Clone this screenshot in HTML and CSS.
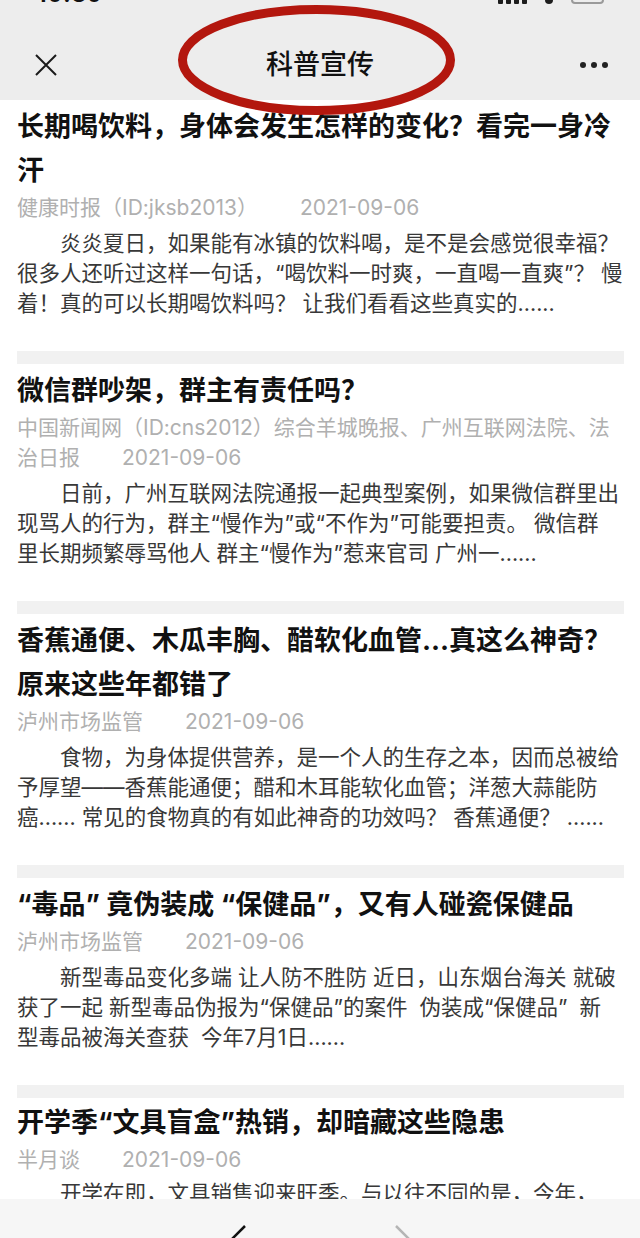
FILE: index.html
```html
<!DOCTYPE html>
<html lang="zh-CN">
<head>
    <meta charset="UTF-8">
    <meta name="viewport" content="width=device-width, initial-scale=1.0">
    <title>科普宣传</title>
    <link rel="stylesheet" href="styles.css">
</head>
<body>
    <header class="topbar">
        <div class="status">
            <span class="status-time">10:30</span>
            <span class="status-icons">
                <span class="signal"><i></i><i></i><i></i><i></i></span>
                <span class="wifi"></span>
                <span class="battery"></span>
            </span>
        </div>
        <div class="nav">
            <button class="nav-close" aria-label="关闭">
                <svg width="22" height="22" viewBox="0 0 22 22"><path d="M1 1L21 21M21 1L1 21" stroke="#1a1a1a" stroke-width="2" fill="none"/></svg>
            </button>
            <h1 class="nav-title">科普宣传</h1>
            <button class="nav-more" aria-label="更多"><span></span><span></span><span></span></button>
        </div>
    </header>

    <!-- hand-drawn red circle around the title -->
    <svg class="mark" width="285" height="122" viewBox="0 0 285 122">
        <ellipse cx="142.5" cy="60" rx="134" ry="50.5" fill="none" stroke="#b3170e" stroke-width="9"/>
    </svg>

    <main class="feed">
        <article class="post">
            <h2 class="post-title">长期喝饮料，身体会发生怎样的变化？看完一身冷汗</h2>
            <p class="post-meta">健康时报（ID:jksb2013）<span class="post-date">2021-09-06</span></p>
            <p class="post-summary">炎炎夏日，如果能有冰镇的饮料喝，是不是会感觉很幸福？<br>很多人还听过这样一句话，“喝饮料一时爽，一直喝一直爽”？ 慢<br>着！真的可以长期喝饮料吗？ 让我们看看这些真实的......</p>
        </article>
        <div class="divider"></div>

        <article class="post">
            <h2 class="post-title">微信群吵架，群主有责任吗？</h2>
            <p class="post-meta">中国新闻网（ID:cns2012）综合羊城晚报、广州互联网法院、法治日报<span class="post-date">2021-09-06</span></p>
            <p class="post-summary">日前，广州互联网法院通报一起典型案例，如果微信群里出<br>现骂人的行为，群主“慢作为”或“不作为”可能要担责。 微信群<br>里长期频繁辱骂他人 群主“慢作为”惹来官司 广州一......</p>
        </article>
        <div class="divider"></div>

        <article class="post">
            <h2 class="post-title">香蕉通便、木瓜丰胸、醋软化血管...真这么神奇？原来这些年都错了</h2>
            <p class="post-meta">泸州市场监管<span class="post-date">2021-09-06</span></p>
            <p class="post-summary">食物，为身体提供营养，是一个人的生存之本，因而总被给<br>予厚望——香蕉能通便；醋和木耳能软化血管；洋葱大蒜能防<br>癌...... 常见的食物真的有如此神奇的功效吗？ 香蕉通便？ ......</p>
        </article>
        <div class="divider"></div>

        <article class="post">
            <h2 class="post-title">“毒品” 竟伪装成 “保健品”，又有人碰瓷保健品</h2>
            <p class="post-meta">泸州市场监管<span class="post-date">2021-09-06</span></p>
            <p class="post-summary">新型毒品变化多端 让人防不胜防 近日，山东烟台海关 就破<br>获了一起 新型毒品伪报为“保健品”的案件&nbsp; 伪装成“保健品”&nbsp; 新<br>型毒品被海关查获&nbsp; 今年7月1日......</p>
        </article>
        <div class="divider"></div>

        <article class="post last">
            <h2 class="post-title">开学季“文具盲盒”热销，却暗藏这些隐患</h2>
            <p class="post-meta">半月谈<span class="post-date">2021-09-06</span></p>
            <p class="post-summary">开学在即，文具销售迎来旺季。与以往不同的是，今年，</p>
        </article>
    </main>

    <footer class="toolbar">
        <svg width="640" height="39" viewBox="0 0 640 39">
            <polyline points="245,27 231,41 245,55" fill="none" stroke="#111" stroke-width="2.5"/>
            <polyline points="396,27 410,41 396,55" fill="none" stroke="#b5b5b5" stroke-width="2.5"/>
        </svg>
    </footer>
</body>
</html>
```

FILE: styles.css
```css
body {
    margin: 0;
    background: #fff;
    font-family: Inter, "Noto Sans CJK SC", sans-serif;
    overflow: hidden;
}

/* top grey area: status bar + nav */
.topbar {
    background: #ededed;
    height: 100px;
}
.status {
    height: 30px;
    display: flex;
    justify-content: space-between;
    align-items: flex-start;
    padding: 0 36px 0 37px;
    overflow: hidden;
}
.status-time {
    font-size: 22px;
    font-weight: 700;
    line-height: 20px;
    margin-top: -16px;
    letter-spacing: 1px;
    color: #111;
}
.status-icons {
    display: flex;
    align-items: flex-end;
    gap: 18px;
    height: 14px;
    margin-top: -10px;
}
.signal {
    display: flex;
    align-items: flex-end;
    gap: 3px;
    height: 14px;
}
.signal i {
    width: 5px;
    background: #1d1d1d;
    border-radius: 1px;
}
.signal i:nth-child(1) { height: 6px; }
.signal i:nth-child(2) { height: 8px; }
.signal i:nth-child(3) { height: 11px; }
.signal i:nth-child(4) { height: 14px; }
.wifi {
    width: 8px;
    height: 6px;
    background: #1d1d1d;
    border-radius: 0 0 4px 4px;
}
.battery {
    width: 29px;
    height: 10px;
    border: 2px solid #9a9a9a;
    border-radius: 4px;
}

.nav {
    height: 70px;
    display: grid;
    grid-template-columns: 92px 1fr 92px;
    align-items: center;
}
.nav-close {
    justify-self: center;
    border: 0;
    padding: 0;
    background: none;
    width: 22px;
    height: 22px;
}
.nav-close svg {
    display: block;
}
.nav-title {
    margin: 0;
    text-align: center;
    font-size: 27px;
    font-weight: 500;
    color: #111;
    line-height: 70px;
}
.nav-more {
    justify-self: center;
    display: flex;
    gap: 5px;
    border: 0;
    padding: 0;
    background: none;
}
.nav-more span {
    width: 6px;
    height: 6px;
    border-radius: 50%;
    background: #222;
}

.mark {
    position: absolute;
    left: 174px;
    top: 0;
    pointer-events: none;
}

/* article list */
.feed {
    padding: 0 16px 0 17px;
}
.post {
    padding: 5px 0 33px;
}
.post.last {
    padding-top: 3px;
}
.post-title {
    margin: 0;
    font-size: 27px;
    line-height: 44px;
    font-weight: 700;
    color: #111;
}
.post-meta {
    margin: 0;
    font-size: 21px;
    line-height: 30px;
    color: #b0b0b0;
}
.post-date {
    margin-left: 2em;
}
.post-summary {
    margin: 5px 0 0;
    font-size: 21.5px;
    line-height: 30px;
    color: #383838;
    text-indent: 2em;
    white-space: nowrap;
}
.post.last .post-summary {
    margin-top: 3px;
}
.divider {
    height: 13px;
    background: #f1f1f1;
}

.toolbar {
    position: fixed;
    left: 0;
    right: 0;
    bottom: 0;
    height: 39px;
    background: #f6f6f6;
    overflow: hidden;
}
.toolbar svg {
    display: block;
}
```
